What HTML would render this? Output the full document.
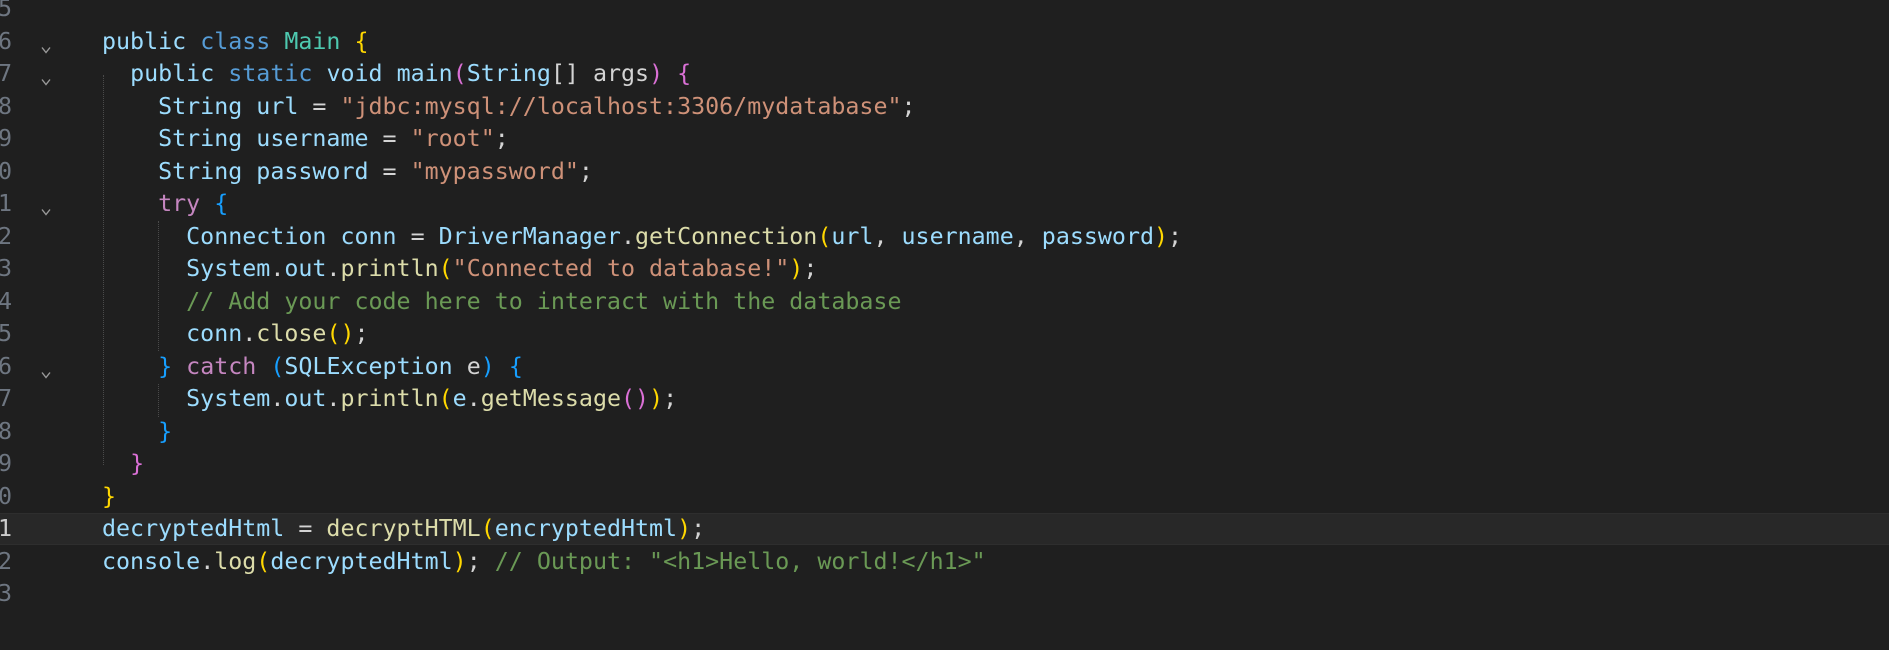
<!DOCTYPE html>
<html><head><meta charset="utf-8"><style>
html,body{margin:0;padding:0;background:#1f1f1f;width:1889px;height:650px;overflow:hidden}
.ed{position:relative;width:1889px;height:650px;font-family:"DejaVu Sans Mono","Liberation Mono",monospace;font-size:23.3px}
.l{position:absolute;left:0;width:1889px;height:32.5px;line-height:32.5px;white-space:pre}
.n{position:absolute;right:1877px;color:#6e7681;text-align:right}
.c{position:absolute;left:102px;color:#d4d4d4}
.f{position:absolute;left:41px;top:20px;width:10px;height:8px}
.hl{position:absolute;left:0;top:513px;width:1889px;height:32px;background:#282828;border-top:1px solid #2e2e2e;border-bottom:1px solid #2e2e2e;box-sizing:border-box}
.g{position:absolute;width:0;border-left:1px dotted #4a4a4a}
.k{color:#569cd6}.v{color:#9cdcfe}.t{color:#4ec9b0}.fn{color:#dcdcaa}.s{color:#ce9178}.cm{color:#6a9955}.ct{color:#c586c0}
.b1{color:#ffd700}.b2{color:#da70d6}.b3{color:#179fff}.w{color:#d4d4d4}
</style></head><body><div class="ed">
<div class="hl"></div>
<div class="g" style="left:103px;top:75px;height:390px"></div>
<div class="g" style="left:158px;top:221px;height:130px"></div>
<div class="g" style="left:158px;top:384px;height:33px"></div>

<div class="l" style="top:-7px"><span class="n">5</span></div>
<div class="l" style="top:25.5px"><span class="n">6</span><svg class="f" viewBox="0 0 10 8"><path d="M1 1.5L5 6.5L9 1.5" fill="none" stroke="#9a9a9a" stroke-width="1.4"/></svg><span class="c"><span class="v">public</span> <span class="k">class</span> <span class="t">Main</span> <span class="b1">{</span></span></div>
<div class="l" style="top:58px"><span class="n">7</span><svg class="f" viewBox="0 0 10 8"><path d="M1 1.5L5 6.5L9 1.5" fill="none" stroke="#9a9a9a" stroke-width="1.4"/></svg><span class="c">  <span class="v">public</span> <span class="k">static</span> <span class="v">void</span> <span class="v">main</span><span class="b2">(</span><span class="v">String</span><span class="w">[]</span> <span class="w">args</span><span class="b2">)</span> <span class="b2">{</span></span></div>
<div class="l" style="top:90.5px"><span class="n">8</span><span class="c">    <span class="v">String url</span> = <span class="s">"jdbc:mysql://localhost:3306/mydatabase"</span>;</span></div>
<div class="l" style="top:123px"><span class="n">9</span><span class="c">    <span class="v">String username</span> = <span class="s">"root"</span>;</span></div>
<div class="l" style="top:155.5px"><span class="n">0</span><span class="c">    <span class="v">String password</span> = <span class="s">"mypassword"</span>;</span></div>
<div class="l" style="top:188px"><span class="n">1</span><svg class="f" viewBox="0 0 10 8"><path d="M1 1.5L5 6.5L9 1.5" fill="none" stroke="#9a9a9a" stroke-width="1.4"/></svg><span class="c">    <span class="ct">try</span> <span class="b3">{</span></span></div>
<div class="l" style="top:220.5px"><span class="n">2</span><span class="c">      <span class="v">Connection conn</span> = <span class="v">DriverManager</span>.<span class="fn">getConnection</span><span class="b1">(</span><span class="v">url</span>, <span class="v">username</span>, <span class="v">password</span><span class="b1">)</span>;</span></div>
<div class="l" style="top:253px"><span class="n">3</span><span class="c">      <span class="v">System</span>.<span class="v">out</span>.<span class="fn">println</span><span class="b1">(</span><span class="s">"Connected to database!"</span><span class="b1">)</span>;</span></div>
<div class="l" style="top:285.5px"><span class="n">4</span><span class="c">      <span class="cm">// Add your code here to interact with the database</span></span></div>
<div class="l" style="top:318px"><span class="n">5</span><span class="c">      <span class="v">conn</span>.<span class="fn">close</span><span class="b1">()</span>;</span></div>
<div class="l" style="top:350.5px"><span class="n">6</span><svg class="f" viewBox="0 0 10 8"><path d="M1 1.5L5 6.5L9 1.5" fill="none" stroke="#9a9a9a" stroke-width="1.4"/></svg><span class="c">    <span class="b3">}</span> <span class="ct">catch</span> <span class="b3">(</span><span class="v">SQLException</span> <span class="w">e</span><span class="b3">)</span> <span class="b3">{</span></span></div>
<div class="l" style="top:383px"><span class="n">7</span><span class="c">      <span class="v">System</span>.<span class="v">out</span>.<span class="fn">println</span><span class="b1">(</span><span class="v">e</span>.<span class="fn">getMessage</span><span class="b2">()</span><span class="b1">)</span>;</span></div>
<div class="l" style="top:415.5px"><span class="n">8</span><span class="c">    <span class="b3">}</span></span></div>
<div class="l" style="top:448px"><span class="n">9</span><span class="c">  <span class="b2">}</span></span></div>
<div class="l" style="top:480.5px"><span class="n">0</span><span class="c"><span class="b1">}</span></span></div>
<div class="l" style="top:513px"><span class="n" style="color:#cccccc">1</span><span class="c"><span class="v">decryptedHtml</span> = <span class="fn">decryptHTML</span><span class="b1">(</span><span class="v">encryptedHtml</span><span class="b1">)</span>;</span></div>
<div class="l" style="top:545.5px"><span class="n">2</span><span class="c"><span class="v">console</span>.<span class="fn">log</span><span class="b1">(</span><span class="v">decryptedHtml</span><span class="b1">)</span>; <span class="cm">// Output: "&lt;h1&gt;Hello, world!&lt;/h1&gt;"</span></span></div>
<div class="l" style="top:578px"><span class="n">3</span></div>
</div></body></html>
